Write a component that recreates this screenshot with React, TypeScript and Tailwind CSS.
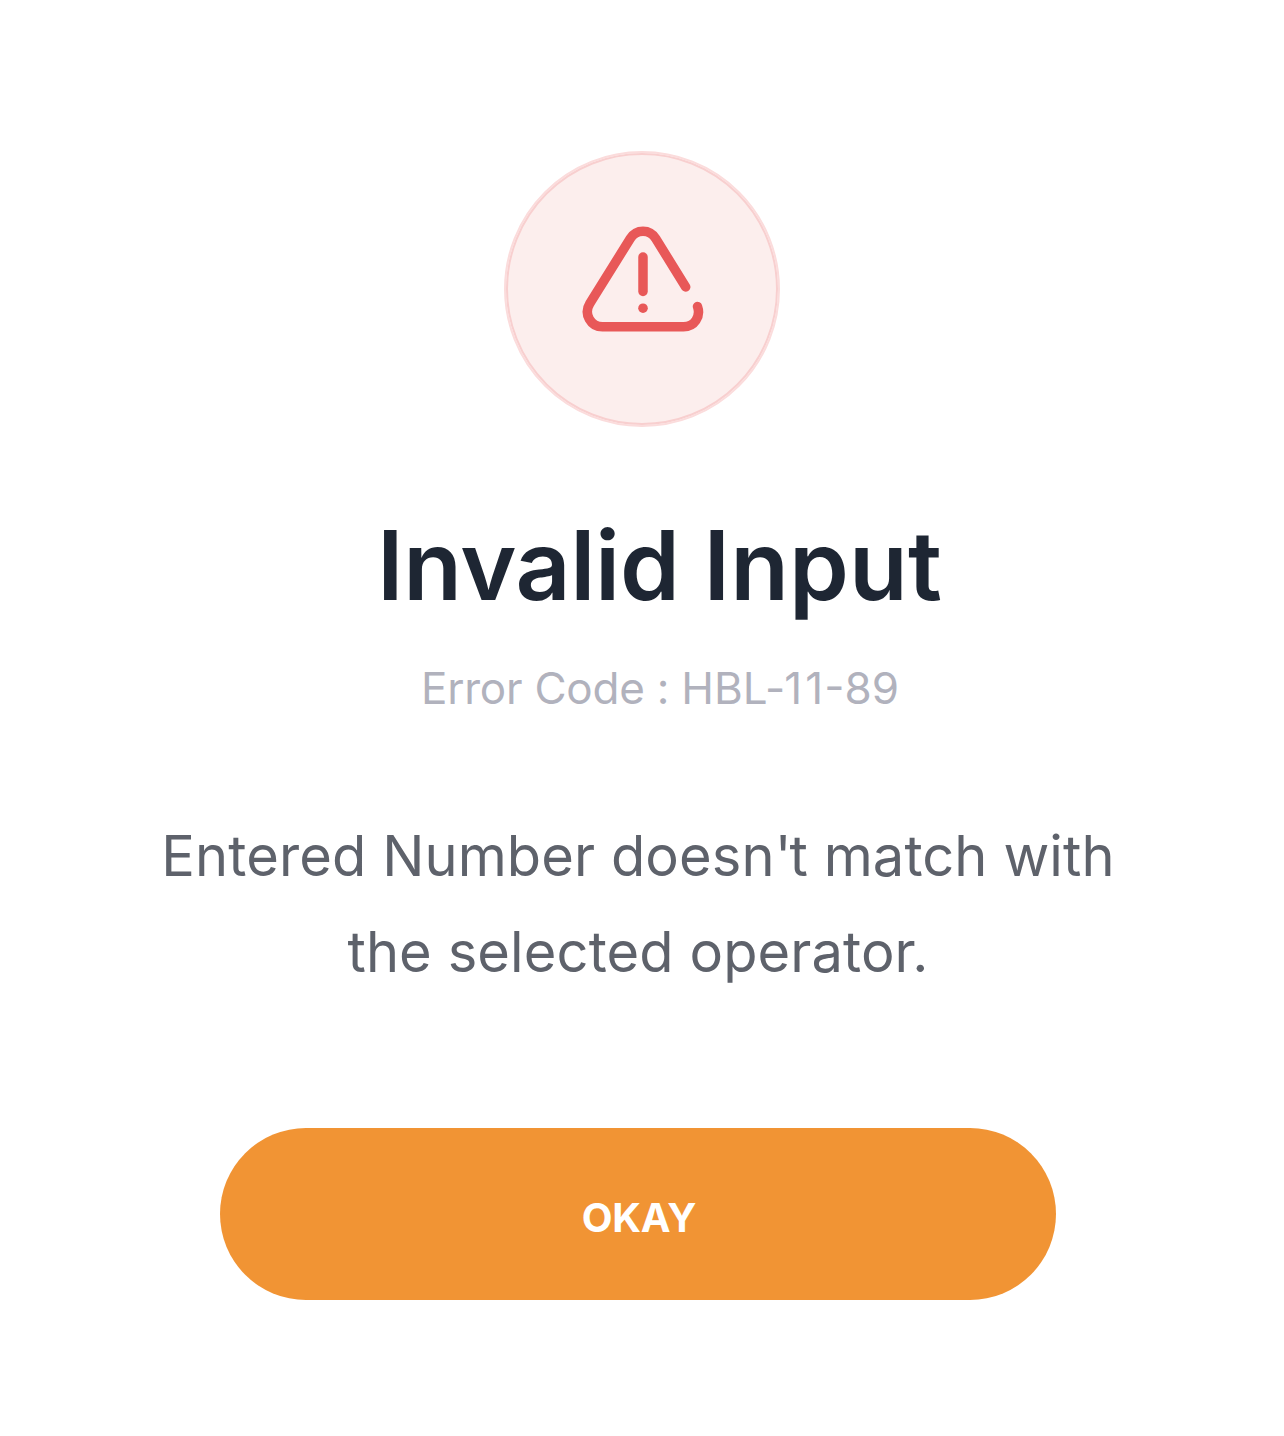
function AlertIcon() {
  return (
    <svg width="150" height="130" viewBox="570 215 150 130" fill="none" stroke="#e85858" strokeWidth="9.5" strokeLinecap="round" strokeLinejoin="round">
      <path d="M685.7 287 L655.700 238.5 C649.7 228.7 636.3 228.7 630.3 238.5 L589.800 303.500 C583.3 314 590.800 326.800 602.500 326.800 L683.500 326.800 C694.500 326.800 701 316.500 697.500 306.500" />
      <path d="M643 257V291.500" />
      <circle cx="643" cy="308.200" r="4.8" fill="#e85858" stroke="none" />
    </svg>
  );
}

export default function App() {
  return (
    <main className="flex h-[1436px] w-[1284px] flex-col items-center bg-white pt-[151px] font-['Inter',sans-serif]">
      <div className="h-[276px] w-[276px] shrink-0 rounded-full border-2 border-[#fbdcdc]">
        <div className="flex h-full w-full items-start justify-center rounded-full border-2 border-[#f8cfcf] bg-[#fceeed] pt-[60px] pl-[6px]">
          <AlertIcon />
        </div>
      </div>
      <h1 className="mt-[78px] ml-[35px] text-[96px] leading-[120px] font-semibold tracking-[-0.15px] whitespace-nowrap text-[#1e2633]">
        <span className="tracking-[-0.3px]">Invalid</span> <span className="tracking-[0.1px]">Input</span>
      </h1>
      <p className="mt-[33px] ml-[36px] text-[44px] leading-[60px] tracking-[-0.25px] whitespace-nowrap text-[#b1b2bd]">
        Error Code : <span className="tracking-[0px] [font-kerning:none]">HB<span className="tracking-[-2.5px]">L</span><span className="tracking-[-1px]">-</span><span className="tracking-[3px]">1</span><span className="tracking-[1px]">1</span>-89</span>
      </p>
      <p className="mt-[90px] mr-[8px] text-center text-[56px] leading-[96px] tracking-[0.1px] whitespace-nowrap text-[#5e626b]">
        Entered Number doesn<span className="tracking-[-2px]">'</span>t match with<br />the selected operator.
      </p>
      <button className="mt-[128px] mr-[8px] h-[172px] w-[836px] shrink-0 rounded-full bg-[#f19434] pt-[8px] pl-[2px] text-[40px] font-bold tracking-[-0.2px] text-white">OKAY</button>
    </main>
  );
}
